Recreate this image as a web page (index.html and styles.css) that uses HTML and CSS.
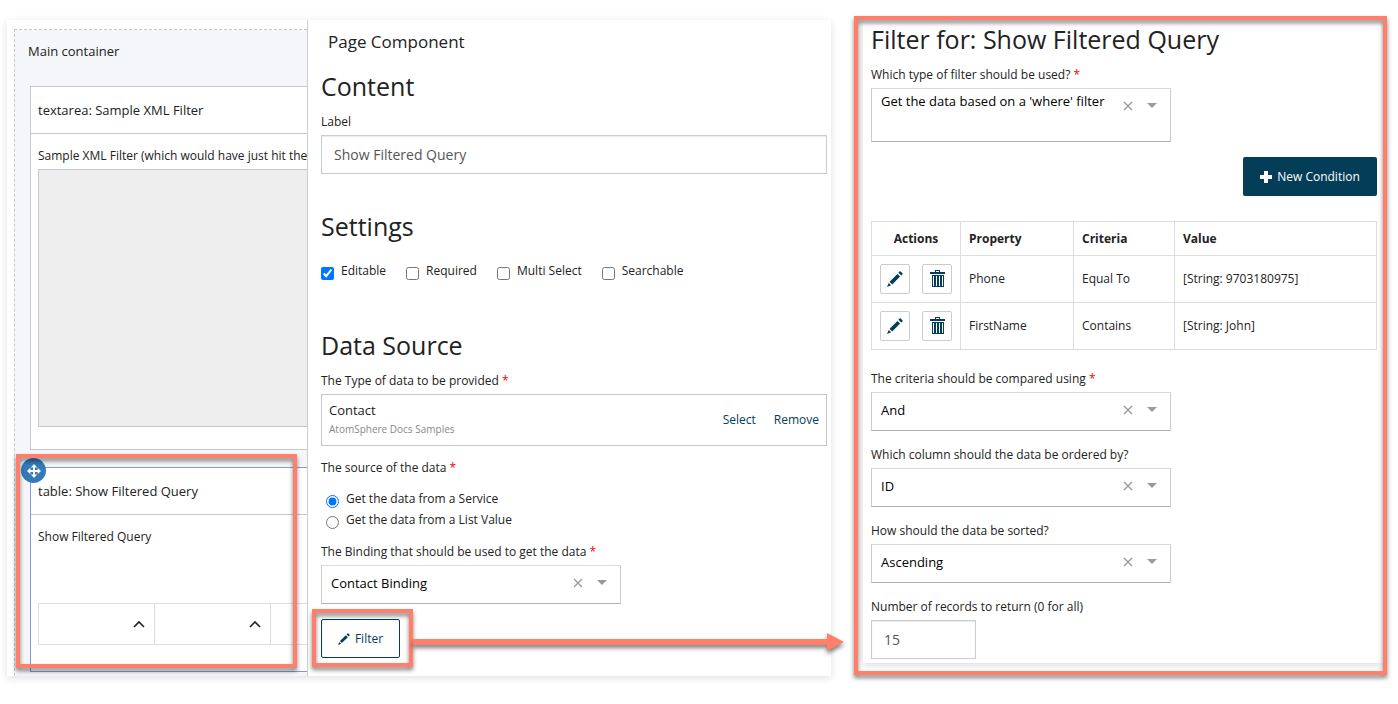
FILE: index.html
```
<!DOCTYPE html>
<html lang="en">
<head>
    <meta charset="UTF-8">
    <meta name="viewport" content="width=device-width, initial-scale=1.0">
    <title>Page Component</title>
    <link rel="stylesheet" href="styles.css">
</head>
<body>
    <svg class="sprite" aria-hidden="true">
        <symbol id="pencil" viewBox="0 0 16 16">
            <path d="M12.6.6a.9.9 0 0 1 1.2 0l1.6 1.6a.9.9 0 0 1 0 1.2l-1.2 1.2-2.8-2.8zM10.5 2.9l2.6 2.6-7.9 7.9-2.6-2.6zM1.7 11.9l2.4 2.4L0 16z"/>
        </symbol>
        <symbol id="trash" viewBox="0 0 15 18">
            <path fill-rule="evenodd" d="M5 0h5v2h5v2H0V2h5zM6 1v1h3V1zM2 5h12v12H2zM3 6v10h1V6zM6 6v10h1V6zM9 6v10h1V6zM12 6v10h1V6z"/>
        </symbol>
        <symbol id="plus" viewBox="0 0 12 12">
            <path d="M4 0h4v4h4v4H8v4H4V8H0V4h4z"/>
        </symbol>
        <symbol id="move" viewBox="0 0 14 14">
            <path d="M7 0l3.2 3.4H8v2.6h2.6V3.8L14 7l-3.4 3.2V8H8v2.6h2.2L7 14l-3.2-3.4H6V8H3.4v2.2L0 7l3.4-3.2V6H6V3.4H3.8z"/>
        </symbol>
        <symbol id="cross" viewBox="0 0 10 10">
            <path d="M1 1l8 8M9 1L1 9" fill="none" stroke="currentColor" stroke-width="1.3"/>
        </symbol>
        <symbol id="caret" viewBox="0 0 10 5">
            <path d="M0 0h10L5 5z"/>
        </symbol>
        <symbol id="chevron" viewBox="0 0 12 8">
            <path d="M1 7l5-5 5 5" fill="none" stroke="currentColor" stroke-width="1.6"/>
        </symbol>
    </svg>

    <main class="board">
        <section class="editor">
            <div class="canvas">
                <div class="container">
                    <p class="container-title">Main container</p>

                    <div class="component">
                        <p class="component-title">textarea: Sample XML Filter</p>
                        <div class="component-body">
                            <label for="xml">Sample XML Filter (which would have just hit the</label>
                            <textarea id="xml" disabled></textarea>
                        </div>
                    </div>

                    <div class="component selected">
                        <button class="move" aria-label="Move"><svg><use href="#move"/></svg></button>
                        <p class="component-title">table: Show Filtered Query</p>
                        <div class="component-body">
                            <p class="label">Show Filtered Query</p>
                            <table class="preview">
                                <tr>
                                    <th><svg><use href="#chevron"/></svg></th>
                                    <th><svg><use href="#chevron"/></svg></th>
                                    <th></th>
                                </tr>
                            </table>
                        </div>
                        <div class="callout callout-table"></div>
                    </div>
                </div>
            </div>

            <div class="config">
                <h1>Page Component</h1>

                <h2>Content</h2>
                <label for="label">Label</label>
                <input class="text-input" id="label" type="text" value="Show Filtered Query">

                <h2 class="settings-title">Settings</h2>
                <div class="checks">
                    <label><input type="checkbox" checked> Editable</label>
                    <label><input type="checkbox"> Required</label>
                    <label><input type="checkbox"> Multi Select</label>
                    <label><input type="checkbox"> Searchable</label>
                </div>

                <h2 class="source-title">Data Source</h2>
                <p class="label">The Type of data to be provided <span class="required">*</span></p>
                <div class="type-box">
                    <div class="type-name">
                        <p>Contact</p>
                        <small>AtomSphere Docs Samples</small>
                    </div>
                    <a href="#">Select</a>
                    <a href="#">Remove</a>
                </div>

                <p class="label">The source of the data <span class="required">*</span></p>
                <div class="radios">
                    <label><input type="radio" name="source" checked> Get the data from a Service</label>
                    <label><input type="radio" name="source"> Get the data from a List Value</label>
                </div>

                <label for="binding">The Binding that should be used to get the data <span class="required">*</span></label>
                <div class="combo">
                    <select id="binding"><option>Contact Binding</option></select>
                    <button aria-label="Clear"><svg class="cross"><use href="#cross"/></svg></button>
                    <svg class="caret"><use href="#caret"/></svg>
                </div>

                <div class="filter">
                    <button class="filter-btn"><svg><use href="#pencil"/></svg>Filter</button>
                    <div class="callout callout-filter"></div>
                </div>
                <div class="arrow"></div>
            </div>
        </section>

        <section class="filter-panel">
            <div class="sheet">
                <h2>Filter for: Show Filtered Query</h2>
                <label for="type">Which type of filter should be used? <span class="required">*</span></label>
                <div class="combo tall">
                    <select id="type"><option>Get the data based on a 'where' filter</option></select>
                    <button aria-label="Clear"><svg class="cross"><use href="#cross"/></svg></button>
                    <svg class="caret"><use href="#caret"/></svg>
                </div>

                <button class="new-btn"><svg><use href="#plus"/></svg>New Condition</button>

                <table class="conditions">
                    <thead>
                        <tr><th>Actions</th><th>Property</th><th>Criteria</th><th>Value</th></tr>
                    </thead>
                    <tbody>
                        <tr>
                            <td>
                                <div class="actions">
                                    <button aria-label="Edit"><svg class="pencil"><use href="#pencil"/></svg></button>
                                    <button aria-label="Delete"><svg class="trash"><use href="#trash"/></svg></button>
                                </div>
                            </td>
                            <td>Phone</td><td>Equal To</td><td>[String: 9703180975]</td>
                        </tr>
                        <tr>
                            <td>
                                <div class="actions">
                                    <button aria-label="Edit"><svg class="pencil"><use href="#pencil"/></svg></button>
                                    <button aria-label="Delete"><svg class="trash"><use href="#trash"/></svg></button>
                                </div>
                            </td>
                            <td>FirstName</td><td>Contains</td><td>[String: John]</td>
                        </tr>
                    </tbody>
                </table>

                <div class="group">
                    <label for="compare">The criteria should be compared using <span class="required">*</span></label>
                    <div class="combo">
                        <select id="compare"><option>And</option></select>
                        <button aria-label="Clear"><svg class="cross"><use href="#cross"/></svg></button>
                        <svg class="caret"><use href="#caret"/></svg>
                    </div>
                </div>
                <div class="group">
                    <label for="order">Which column should the data be ordered by?</label>
                    <div class="combo">
                        <select id="order"><option>ID</option></select>
                        <button aria-label="Clear"><svg class="cross"><use href="#cross"/></svg></button>
                        <svg class="caret"><use href="#caret"/></svg>
                    </div>
                </div>
                <div class="group">
                    <label for="sort">How should the data be sorted?</label>
                    <div class="combo">
                        <select id="sort"><option>Ascending</option></select>
                        <button aria-label="Clear"><svg class="cross"><use href="#cross"/></svg></button>
                        <svg class="caret"><use href="#caret"/></svg>
                    </div>
                </div>
                <label for="limit">Number of records to return (0 for all)</label>
                <input class="text-input short" id="limit" type="text" value="15">
            </div>
            <div class="callout callout-panel"></div>
        </section>
    </main>
</body>
</html>
```
FILE: styles.css
```
* {
    box-sizing: border-box;
}
body {
    margin: 0;
    background: #fff;
    color: #222;
    font-family: "Open Sans", sans-serif;
    font-size: 12px;
    line-height: 20px;
}
h1, h2, p {
    margin: 0;
    font-weight: 400;
}
h1 {
    padding: 10px 7px 0;
    font-size: 17px;
    line-height: 24px;
}
h2 {
    margin-bottom: 12px;
    font-size: 25px;
    line-height: 28px;
}
button, input, select, textarea {
    font: inherit;
}
button {
    display: flex;
    align-items: center;
    justify-content: center;
    padding: 0;
    background: none;
    border: none;
    cursor: pointer;
}
svg {
    display: block;
    flex: none;
    fill: currentColor;
}
.sprite {
    position: absolute;
    width: 0;
    height: 0;
}
label, .label {
    display: block;
    margin-bottom: 3px;
}
.required {
    color: #f00;
}

.board {
    display: grid;
    grid-template-columns: 824fr 533fr;
    gap: 23px;
    align-items: start;
    padding: 16px 11px 28px 7px;
}
.editor {
    display: grid;
    grid-template-columns: 300px 1fr;
    margin-top: 4px;
    box-shadow: 0 2px 8px rgba(0, 0, 0, 0.12);
}

/* page canvas */
.canvas {
    overflow: hidden;
    padding: 9px 0 0 7px;
}
.container {
    height: 100%;
    padding: 11px 0 0 15px;
    background: #f4f6f9;
    border: 1px dashed #c8c8c8;
    border-width: 1px 0 0 1px;
}
.container-title {
    margin: 0 0 25px -2px;
    font-size: 13px;
}
.component {
    position: relative;
    margin-bottom: 17px;
    background: #fff;
    border: 1px solid #c8c8c8;
    border-right: none;
}
.component-title {
    padding: 13px 7px;
    border-bottom: 1px solid #c8c8c8;
    font-size: 13px;
}
.component-body {
    padding: 12px 0 22px 7px;
}
.component-body label {
    white-space: nowrap;
}
.component-body textarea {
    display: block;
    width: 100%;
    height: 258px;
    background: #eee;
    border: 1px solid #c8c8c8;
    border-right: none;
    resize: none;
}
.selected {
    margin-bottom: 0;
    border-color: #7f9be0;
}
.selected .component-body {
    padding-bottom: 26px;
}
.move {
    position: absolute;
    top: -10px;
    left: -10px;
    width: 25px;
    height: 25px;
    border-radius: 50%;
    background: #337ab7;
    color: #fff;
}
.move svg {
    width: 14px;
    height: 14px;
}
.preview {
    width: 100%;
    margin-top: 56px;
    border-collapse: collapse;
    table-layout: fixed;
}
.preview th {
    width: 116px;
    height: 41px;
    padding: 0 9px;
    border: 1px solid #ddd;
}
.preview th:last-child {
    width: auto;
    border-right: none;
}
.preview svg {
    width: 12px;
    height: 8px;
    margin-left: auto;
}

/* component settings */
.config {
    position: relative;
    padding: 0 4px 18px 13px;
    border-left: 1px solid #ccc;
}
h1 + h2 {
    margin-top: 18px;
}
.text-input {
    display: block;
    width: 100%;
    height: 39px;
    padding: 0 12px;
    border: 1px solid #ccc;
    box-shadow: inset 0 1px 1px rgba(0, 0, 0, 0.08);
    color: #555;
    font-size: 14px;
}
.short {
    width: 105px;
}
.settings-title {
    margin-top: 38px;
    margin-bottom: 21px;
}
.checks {
    display: flex;
    gap: 20px;
}
.checks label, .radios label {
    display: flex;
    gap: 7px;
    margin: 0;
}
.checks input, .radios input {
    width: 13px;
    height: 13px;
    margin: 6px 0 0;
}
.source-title {
    margin-top: 50px;
}
.type-box {
    display: flex;
    align-items: center;
    gap: 18px;
    margin-bottom: 12px;
    padding: 6px 7px;
    border: 1px solid #c8c8c8;
}
.type-name {
    flex: 1;
    font-size: 13px;
    line-height: 19px;
}
.type-name small {
    display: block;
    color: #888;
    font-size: 10px;
}
.type-box a {
    color: #033d58;
    text-decoration: none;
}
.radios {
    margin-bottom: 11px;
    padding: 8px 0 0 5px;
}
.radios label {
    height: 21px;
}
.combo {
    display: flex;
    align-items: center;
    width: 300px;
    max-width: 100%;
    height: 39px;
    padding: 0 13px 4px 0;
    border: 1px solid #ccc;
    border-color: #d9d9d9 #ccc #b3b3b3;
    color: #999;
}
.combo select {
    flex: 1;
    min-width: 0;
    height: 24px;
    padding: 0 9px;
    appearance: none;
    background: none;
    border: none;
    color: #000;
    font-size: 13px;
}
.combo button {
    width: 20px;
    height: 24px;
    margin-right: 9px;
    color: inherit;
}
.cross {
    width: 10px;
    height: 10px;
}
.caret {
    width: 10px;
    height: 5px;
}
.tall {
    align-items: flex-start;
    height: 54px;
}
.tall button {
    margin-top: 5px;
}
.tall .caret {
    margin-top: 14px;
}
.filter {
    position: relative;
    width: fit-content;
    margin-top: 15px;
}
.filter-btn {
    gap: 5px;
    width: 79px;
    height: 39px;
    border: 1px solid #033d58;
    border-radius: 2px;
    color: #033d58;
}
.filter-btn svg {
    width: 12px;
    height: 12px;
}

/* filter details */
.filter-panel {
    position: relative;
    padding: 4px 4px 12px 9px;
}
.sheet {
    padding: 5px 6px 4px 8px;
    box-shadow: 0 2px 8px rgba(0, 0, 0, 0.15);
}
.new-btn {
    gap: 5px;
    width: 134px;
    height: 39px;
    margin: 15px 0 25px auto;
    border-radius: 2px;
    background: #033d58;
    color: #fff;
}
.new-btn svg {
    width: 12px;
    height: 12px;
}
.conditions {
    width: 100%;
    margin-bottom: 19px;
    border-collapse: collapse;
    text-align: left;
}
.conditions th, .conditions td {
    height: 47px;
    padding: 0 8px;
    border: 1px solid #ddd;
}
.conditions th {
    height: 34px;
}
.conditions th:first-child {
    width: 89px;
    text-align: center;
}
.conditions th:nth-child(2) {
    width: 113px;
}
.conditions th:nth-child(3) {
    width: 101px;
}
.actions {
    display: flex;
    gap: 12px;
}
.actions button {
    width: 30px;
    height: 30px;
    border: 1px solid #ccc;
    border-radius: 2px;
    color: #033d58;
}
.pencil {
    width: 16px;
    height: 16px;
}
.trash {
    width: 15px;
    height: 18px;
}
.group {
    margin-bottom: 14px;
}

/* highlights over the panels */
.callout {
    position: absolute;
    border: 4px solid #ff7f6a;
    filter: drop-shadow(0 3px 2px rgba(0, 0, 0, 0.5));
    pointer-events: none;
}
.callout-table {
    inset: -14px 10px 3px -15px;
}
.callout-filter {
    inset: -10px -13px -9px -9px;
}
.callout-panel {
    inset: 0;
}
.arrow {
    position: absolute;
    z-index: 1;
    right: -13px;
    bottom: 25px;
    left: 105px;
    height: 18px;
    background: linear-gradient(#ff7f6a, #ff7f6a) left center / calc(100% - 17px) 6px no-repeat;
    filter: drop-shadow(0 3px 2px rgba(0, 0, 0, 0.5));
}
.arrow::after {
    content: "";
    position: absolute;
    top: 0;
    right: 0;
    border: 9px solid transparent;
    border-right: none;
    border-left: 17px solid #ff7f6a;
}
```
